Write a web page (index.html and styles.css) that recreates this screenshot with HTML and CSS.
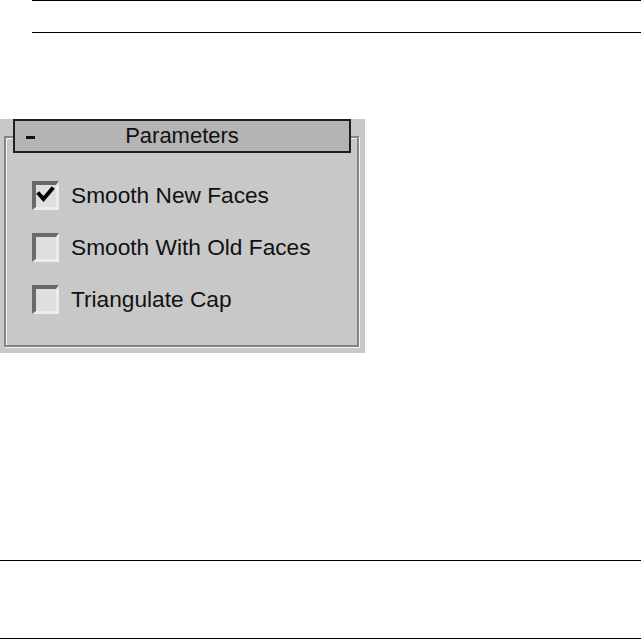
FILE: index.html
```html
<!DOCTYPE html>
<html>
<head>
<meta charset="utf-8">
<link rel="stylesheet" href="styles.css">
</head>
<body>
<div class="topband"></div>
<div class="panel">
  <div class="frame">
    <div class="row">
      <span class="box checked"><svg width="20" height="21" viewBox="0 0 20 21"><path d="M3 9 L7.5 14 L16 4" fill="none" stroke="#000" stroke-width="4" stroke-linecap="square" stroke-linejoin="miter"/></svg></span>
      <span class="label">Smooth New Faces</span>
    </div>
    <div class="row">
      <span class="box"></span>
      <span class="label">Smooth With Old Faces</span>
    </div>
    <div class="row">
      <span class="box"></span>
      <span class="label">Triangulate Cap</span>
    </div>
  </div>
  <div class="header"><span class="minus"></span><span class="title">Parameters</span></div>
</div>
<div class="bottomband"></div>
</body>
</html>
```
FILE: styles.css
```css
html, body {
  margin: 0;
  padding: 0;
  background: #fff;
  font-family: "Liberation Sans", Arial, sans-serif;
}
.topband {
  margin-left: 32px;
  height: 31px;
  border-top: 1px solid #000;
  border-bottom: 1px solid #000;
}
.panel {
  position: relative;
  margin-top: 86px;
  width: 365px;
  height: 234px;
  background: #c8c8c8;
  padding-top: 17px;
  box-sizing: border-box;
}
.frame {
  margin-left: 4px;
  width: 355px;
  height: 211px;
  box-sizing: border-box;
  border: 2px solid #858585;
  box-shadow: 1px 1px 0 #f4f4f4, inset 1px 1px 0 #f4f4f4;
  padding-top: 31px;
  padding-left: 26px;
}
.row {
  display: flex;
  align-items: center;
  height: 52px;
}
.box {
  width: 27px;
  height: 29px;
  box-sizing: border-box;
  border-top: 4px solid #6a6a6a;
  border-left: 4px solid #6a6a6a;
  border-bottom: 3px solid #ececec;
  border-right: 3px solid #ececec;
  background: #dfdfdf;
  display: flex;
  align-items: center;
  justify-content: center;
  flex: none;
}
.label {
  margin-left: 12px;
  font-size: 22.7px;
  color: #111;
  line-height: 1;
}
.header {
  position: absolute;
  top: 0;
  left: 13px;
  width: 338px;
  height: 34px;
  box-sizing: border-box;
  border: 2px solid #1e1e1e;
  background: #b4b4b4;
  display: flex;
  align-items: center;
  justify-content: center;
}
.minus {
  position: absolute;
  left: 11px;
  top: 15px;
  width: 9px;
  height: 3px;
  background: #111;
}
.title {
  font-size: 22px;
  color: #111;
  line-height: 1;
}
.bottomband {
  margin-top: 207px;
  height: 77px;
  border-top: 1px solid #000;
  border-bottom: 1px solid #000;
}
```
